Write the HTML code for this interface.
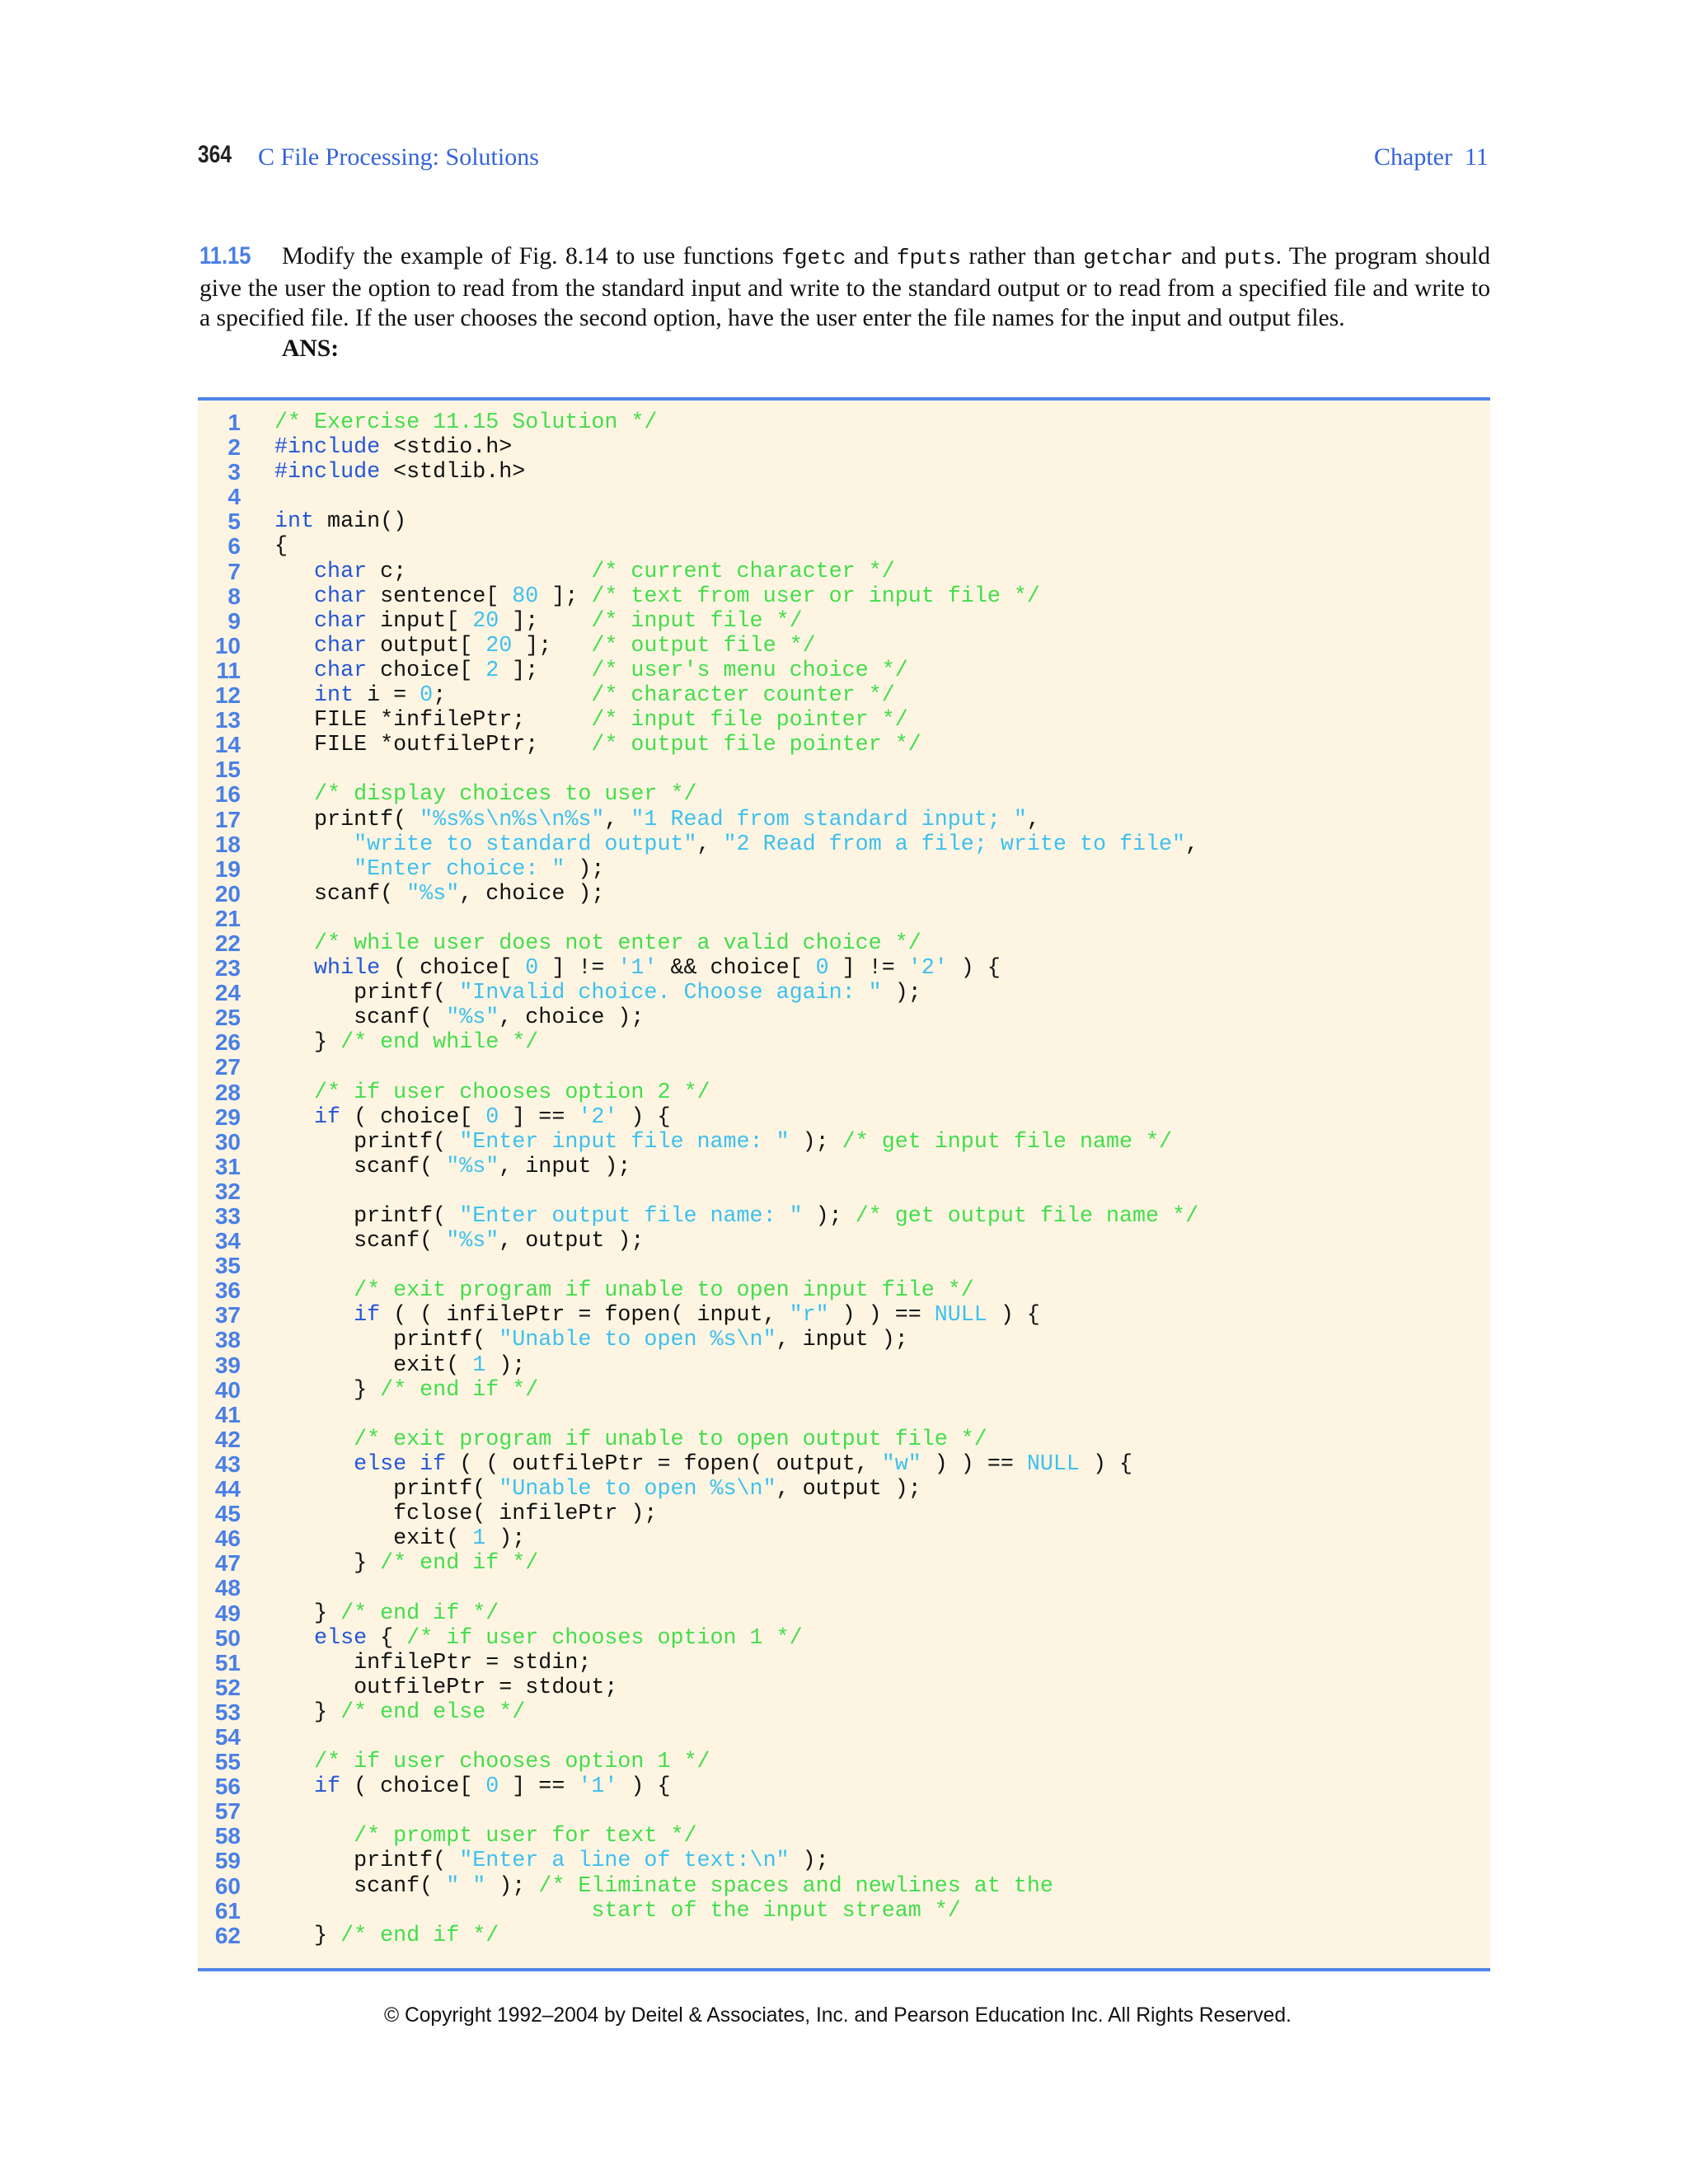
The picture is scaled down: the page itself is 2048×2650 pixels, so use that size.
<!DOCTYPE html>
<html><head><meta charset="utf-8"><style>
html,body{margin:0;padding:0;background:#fff;}
body{width:2048px;height:2650px;position:relative;overflow:hidden;}
.a{position:absolute;white-space:pre;}
.hd{font-family:"Liberation Sans",sans-serif;font-weight:bold;font-size:30px;color:#222;transform:scaleX(0.82);transform-origin:left top;}
.ser{font-family:"Liberation Serif",serif;color:#3464dc;font-size:30px;}
.par{position:absolute;left:242px;top:293px;width:1566px;font-family:"Liberation Serif",serif;font-size:29.6px;line-height:36.5px;color:#111;text-align:justify;}
.par code{font-family:"Liberation Mono",monospace;font-size:26px;}
.num{color:#4a7fe6;font-family:"Liberation Sans",sans-serif;font-weight:bold;font-size:30px;display:inline-block;width:100px;transform:scaleX(0.85);transform-origin:left;}
.box{position:absolute;left:240px;top:482px;width:1568px;height:1902px;background:#fdf5e2;border-top:4px solid #4f86ea;border-bottom:4px solid #4f86ea;}
pre{margin:0;font-family:"Liberation Mono",monospace;font-size:26.7px;line-height:30.1px;color:#111;}
.ln{position:absolute;left:200px;top:498px;width:92px;text-align:right;font-family:"Liberation Sans",sans-serif;font-weight:bold;font-size:28px;line-height:30.1px;color:#4a7fe6;margin:0;}
.code{position:absolute;left:333px;top:498px;}
.k{color:#2456d6}.s{color:#3ec0ee}.c{color:#44dd4c}
.ft{position:absolute;left:466px;top:2432px;font-family:"Liberation Sans",sans-serif;font-size:24.6px;color:#111;white-space:nowrap;}
</style></head><body>
<div class="a hd" style="left:240px;top:171px;">364</div>
<div class="a ser" style="left:313px;top:174px;">C File Processing: Solutions</div>
<div class="a ser" style="left:1667px;top:174px;">Chapter&nbsp; 11</div>
<div class="par"><span class="num">11.15</span>Modify the example of Fig. 8.14 to use functions <code>fgetc</code> and <code>fputs</code> rather than <code>getchar</code> and <code>puts</code>. The program should give the user the option to read from the standard input and write to the standard output or to read from a specified file and write to a specified file. If the user chooses the second option, have the user enter the file names for the input and output files.<br><b style="display:inline-block;margin-left:100px;">ANS:</b></div>
<div class="box"></div>
<pre class="ln">1
2
3
4
5
6
7
8
9
10
11
12
13
14
15
16
17
18
19
20
21
22
23
24
25
26
27
28
29
30
31
32
33
34
35
36
37
38
39
40
41
42
43
44
45
46
47
48
49
50
51
52
53
54
55
56
57
58
59
60
61
62</pre>
<pre class="code"><span class="c">/* Exercise 11.15 Solution */</span>
<span class="k">#include</span> &lt;stdio.h&gt;
<span class="k">#include</span> &lt;stdlib.h&gt;

<span class="k">int</span> main()
{
   <span class="k">char</span> c;              <span class="c">/* current character */</span>
   <span class="k">char</span> sentence[ <span class="s">80</span> ]; <span class="c">/* text from user or input file */</span>
   <span class="k">char</span> input[ <span class="s">20</span> ];    <span class="c">/* input file */</span>
   <span class="k">char</span> output[ <span class="s">20</span> ];   <span class="c">/* output file */</span>
   <span class="k">char</span> choice[ <span class="s">2</span> ];    <span class="c">/* user's menu choice */</span>
   <span class="k">int</span> i = <span class="s">0</span>;           <span class="c">/* character counter */</span>
   FILE *infilePtr;     <span class="c">/* input file pointer */</span>
   FILE *outfilePtr;    <span class="c">/* output file pointer */</span>

   <span class="c">/* display choices to user */</span>
   printf( <span class="s">"%s%s\n%s\n%s"</span>, <span class="s">"1 Read from standard input; "</span>,
      <span class="s">"write to standard output"</span>, <span class="s">"2 Read from a file; write to file"</span>,
      <span class="s">"Enter choice: "</span> );
   scanf( <span class="s">"%s"</span>, choice );

   <span class="c">/* while user does not enter a valid choice */</span>
   <span class="k">while</span> ( choice[ <span class="s">0</span> ] != <span class="s">'1'</span> &amp;&amp; choice[ <span class="s">0</span> ] != <span class="s">'2'</span> ) {
      printf( <span class="s">"Invalid choice. Choose again: "</span> );
      scanf( <span class="s">"%s"</span>, choice );
   } <span class="c">/* end while */</span>

   <span class="c">/* if user chooses option 2 */</span>
   <span class="k">if</span> ( choice[ <span class="s">0</span> ] == <span class="s">'2'</span> ) {
      printf( <span class="s">"Enter input file name: "</span> ); <span class="c">/* get input file name */</span>
      scanf( <span class="s">"%s"</span>, input );

      printf( <span class="s">"Enter output file name: "</span> ); <span class="c">/* get output file name */</span>
      scanf( <span class="s">"%s"</span>, output );

      <span class="c">/* exit program if unable to open input file */</span>
      <span class="k">if</span> ( ( infilePtr = fopen( input, <span class="s">"r"</span> ) ) == <span class="s">NULL</span> ) {
         printf( <span class="s">"Unable to open %s\n"</span>, input );
         exit( <span class="s">1</span> );
      } <span class="c">/* end if */</span>

      <span class="c">/* exit program if unable to open output file */</span>
      <span class="k">else if</span> ( ( outfilePtr = fopen( output, <span class="s">"w"</span> ) ) == <span class="s">NULL</span> ) {
         printf( <span class="s">"Unable to open %s\n"</span>, output );
         fclose( infilePtr );
         exit( <span class="s">1</span> );
      } <span class="c">/* end if */</span>

   } <span class="c">/* end if */</span>
   <span class="k">else</span> { <span class="c">/* if user chooses option 1 */</span>
      infilePtr = stdin;
      outfilePtr = stdout;
   } <span class="c">/* end else */</span>

   <span class="c">/* if user chooses option 1 */</span>
   <span class="k">if</span> ( choice[ <span class="s">0</span> ] == <span class="s">'1'</span> ) {

      <span class="c">/* prompt user for text */</span>
      printf( <span class="s">"Enter a line of text:\n"</span> );
      scanf( <span class="s">" "</span> ); <span class="c">/* Eliminate spaces and newlines at the</span>
<span class="c">                        start of the input stream */</span>
   } <span class="c">/* end if */</span></pre>
<div class="ft">© Copyright 1992–2004 by Deitel &amp; Associates, Inc. and Pearson Education Inc. All Rights Reserved.</div>
</body></html>
